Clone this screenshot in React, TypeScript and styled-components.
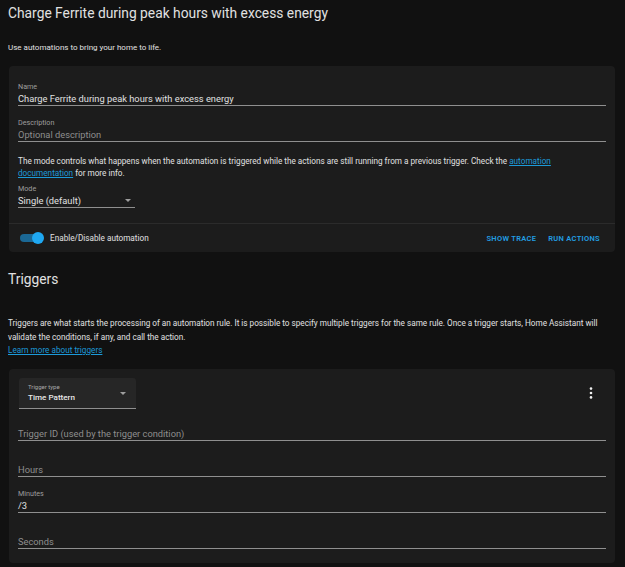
import React from "react";
import styled, { createGlobalStyle } from "styled-components";

const Global = createGlobalStyle`
  html, body { margin: 0; padding: 0; background: #111111; }
  body { font-family: Roboto, "Liberation Sans", Arial, sans-serif; color: #e1e1e1; -webkit-font-smoothing: antialiased; }
  * { box-sizing: border-box; }
`;

const Page = styled.div`
  width: 625px;
  min-height: 567px;
  padding: 3px 10px 0 9px;
  background: #111111;
`;

const Title = styled.h1`
  margin: 0 0 0 -1px;
  font-size: 13.8px;
  line-height: 21px;
  font-weight: 400;
  color: #e1e1e1;
`;

const Intro = styled.p`
  margin: 18px 0 0 -1px;
  font-size: 8px;
  line-height: 12px;
  color: #e1e1e1;
`;

const Card = styled.section<{ $top: number }>`
  margin-top: ${(p) => p.$top}px;
  background: #1c1c1c;
  border-radius: 4px;
  overflow: hidden;
`;

const CardBody = styled.div<{ $pt: number; $pb: number }>`
  padding: ${(p) => p.$pt}px 9px ${(p) => p.$pb}px 9px;
  display: flex;
  flex-direction: column;
`;

const Fields = styled.div`
  display: flex;
  flex-direction: column;
  gap: 4px;
`;

const Field = styled.div`
  height: 32px;
  display: flex;
  flex-direction: column;
  justify-content: flex-end;
  border-bottom: 1px solid #8f8f8f;
`;

const Label = styled.div`
  font-size: 7.2px;
  line-height: 10px;
  color: #9e9e9e;
`;

const Value = styled.div<{ $placeholder?: boolean }>`
  font-size: 9.3px;
  line-height: 13px;
  color: ${(p) => (p.$placeholder ? "#8e8e8e" : "#e1e1e1")};
  white-space: nowrap;
`;

const Help = styled.p`
  margin: 13px 0 0;
  font-size: 8.2px;
  line-height: 12px;
  color: #e1e1e1;
`;

const Link = styled.a`
  color: #1c9ad9;
  text-decoration: underline;
`;

const SelectField = styled.div<{ $width: number }>`
  margin-top: 5px;
  width: ${(p) => p.$width}px;
  border-bottom: 1px solid #8f8f8f;
  position: relative;
`;

const Arrow = styled.span<{ $right: number; $bottom: number }>`
  position: absolute;
  right: ${(p) => p.$right}px;
  bottom: ${(p) => p.$bottom}px;
  width: 0;
  height: 0;
  border-left: 3.2px solid transparent;
  border-right: 3.2px solid transparent;
  border-top: 3.2px solid #9e9e9e;
`;

const Footer = styled.div`
  height: 29px;
  border-top: 1px solid #2b2b2b;
  display: flex;
  align-items: center;
  padding: 0 15px 0 11px;
`;

const Toggle = styled.div`
  position: relative;
  width: 23px;
  height: 12px;
  display: flex;
  align-items: center;
`;

const Track = styled.div`
  width: 22px;
  height: 8px;
  border-radius: 4px;
  background: #1b6895;
`;

const Thumb = styled.div`
  position: absolute;
  right: -1px;
  top: 0;
  width: 12px;
  height: 12px;
  border-radius: 50%;
  background: #1fa8f2;
`;

const ToggleLabel = styled.span`
  margin-left: 7px;
  font-size: 8.2px;
  color: #e1e1e1;
`;

const Spacer = styled.div`
  flex: 1;
`;

const Buttons = styled.div`
  display: flex;
  gap: 12px;
`;

const TextButton = styled.button`
  background: none;
  border: 0;
  padding: 0;
  font-family: inherit;
  font-size: 7.5px;
  font-weight: 600;
  letter-spacing: 0.3px;
  text-transform: uppercase;
  color: #229ee3;
`;

const SectionTitle = styled.h2`
  margin: 17px 0 0 -1px;
  font-size: 13.8px;
  line-height: 21px;
  font-weight: 400;
  color: #e1e1e1;
`;

const SectionText = styled.p`
  margin: 27px 0 0 -1px;
  font-size: 8.2px;
  line-height: 13.5px;
  color: #e1e1e1;
`;

const TriggerHeader = styled.div`
  display: flex;
  align-items: center;
  justify-content: space-between;
  padding-right: 13px;
`;

const TypeBox = styled.div`
  position: relative;
  width: 117px;
  height: 31px;
  margin-left: 1px;
  padding: 5px 0 0 9px;
  background: #262626;
  border-radius: 3px 3px 0 0;
  border-bottom: 1px solid #8f8f8f;
`;

const TypeLabel = styled.div`
  font-size: 6px;
  line-height: 8px;
  color: #a8a8a8;
`;

const TypeValue = styled.div`
  font-size: 8.1px;
  font-weight: 500;
  line-height: 13px;
  color: #e8e8e8;
`;

const Menu = styled.svg`
  display: block;
`;

export default function App() {
  return (
    <>
      <Global />
      <Page>
        <Title>Charge Ferrite during peak hours with excess energy</Title>
        <Intro>Use automations to bring your home to life.</Intro>

        <Card $top={12}>
          <CardBody $pt={8} $pb={15}>
            <Fields>
              <Field>
                <Label>Name</Label>
                <Value>Charge Ferrite during peak hours with excess energy</Value>
              </Field>
              <Field>
                <Label>Description</Label>
                <Value $placeholder>Optional description</Value>
              </Field>
            </Fields>
            <Help>
              The mode controls what happens when the automation is triggered while the actions are still
              running from a previous trigger. Check the <Link href="#">automation</Link>
              <br />
              <Link href="#">documentation</Link> for more info.
            </Help>
            <SelectField $width={117}>
              <Label>Mode</Label>
              <Value>Single (default)</Value>
              <Arrow $right={4} $bottom={5} />
            </SelectField>
          </CardBody>
          <Footer>
            <Toggle>
              <Track />
              <Thumb />
            </Toggle>
            <ToggleLabel>Enable/Disable automation</ToggleLabel>
            <Spacer />
            <Buttons>
              <TextButton>Show trace</TextButton>
              <TextButton>Run actions</TextButton>
            </Buttons>
          </Footer>
        </Card>

        <SectionTitle>Triggers</SectionTitle>
        <SectionText>
          Triggers are what starts the processing of an automation rule. It is possible to specify multiple
          triggers for the same rule. Once a trigger starts, Home Assistant will
          <br />
          validate the conditions, if any, and call the action.
          <br />
          <Link href="#">Learn more about triggers</Link>
        </SectionText>

        <Card $top={11}>
          <CardBody $pt={9} $pb={14}>
            <TriggerHeader>
              <TypeBox>
                <TypeLabel>Trigger type</TypeLabel>
                <TypeValue>Time Pattern</TypeValue>
                <Arrow $right={10} $bottom={13} />
              </TypeBox>
              <Menu width="4" height="12" viewBox="0 0 4 12">
                <circle cx="2" cy="1.6" r="1.3" fill="#f0f0f0" />
                <circle cx="2" cy="6" r="1.3" fill="#f0f0f0" />
                <circle cx="2" cy="10.4" r="1.3" fill="#f0f0f0" />
              </Menu>
            </TriggerHeader>
            <Fields>
              <Field>
                <Value $placeholder>Trigger ID (used by the trigger condition)</Value>
              </Field>
              <Field>
                <Value $placeholder>Hours</Value>
              </Field>
              <Field>
                <Label>Minutes</Label>
                <Value>/3</Value>
              </Field>
              <Field>
                <Value $placeholder>Seconds</Value>
              </Field>
            </Fields>
          </CardBody>
        </Card>
      </Page>
    </>
  );
}
